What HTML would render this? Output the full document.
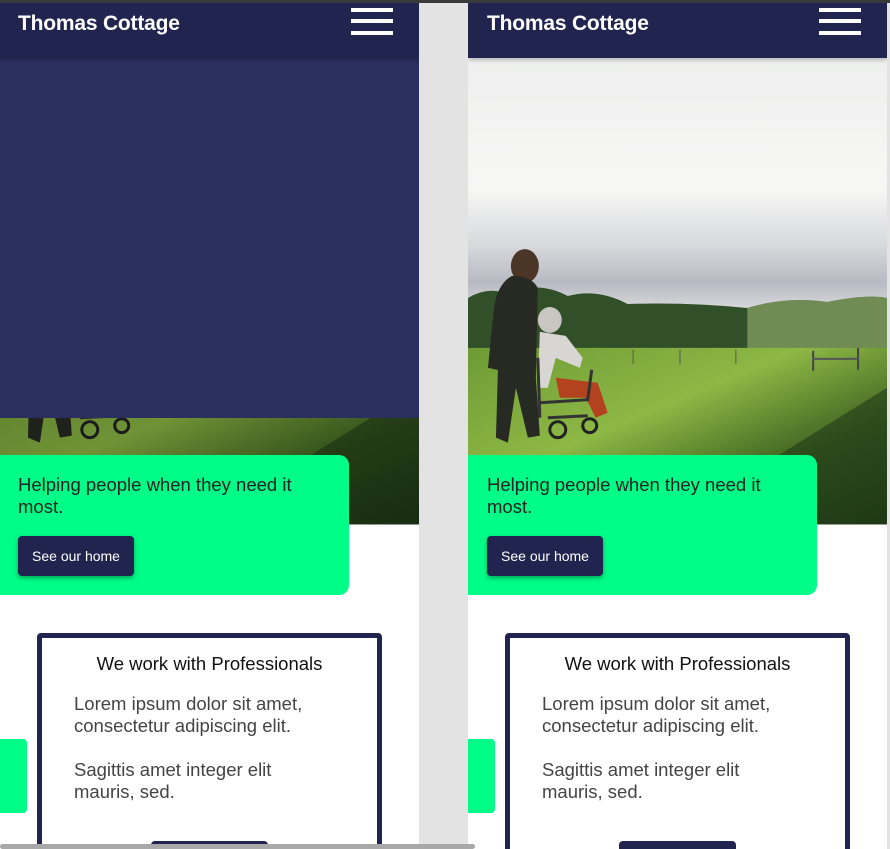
<!DOCTYPE html>
<html><head><meta charset="utf-8">
<style>
*{margin:0;padding:0;box-sizing:border-box}
html,body{width:890px;height:849px;overflow:hidden;background:#e3e3e3;font-family:"Liberation Sans",sans-serif}
.topline{position:absolute;left:0;top:0;width:890px;height:3px;background:#3a3a3a}
.panel{position:absolute;top:3px;width:419px;height:846px;background:#fff;overflow:hidden}
.hdr{position:absolute;left:0;top:0;width:100%;height:55px;background:#20244f;z-index:5;box-shadow:0 2px 4px rgba(0,0,0,.25)}
.hdr .t{position:absolute;left:18px;top:9px;color:#fff;font-size:21px;font-weight:bold;letter-spacing:-.2px}
.hb{position:absolute;left:351px;width:42px;height:4px;background:#fff}
.hero{position:absolute;left:0;top:55px;width:419px;height:467px}
.ov{position:absolute;left:0;top:55px;width:419px;height:360px;background:#2b2f5f;z-index:2}
.card{position:absolute;left:0;top:452px;width:349px;height:140px;background:#00fd87;border-radius:0 10px 10px 0;z-index:3}
.card p{position:absolute;left:18px;top:19px;font-size:18.5px;line-height:22px;color:#222;width:305px}
.btn{position:absolute;left:18px;top:81px;width:116px;height:40px;background:#20244f;border-radius:4px;color:#fff;font-size:14px;line-height:40px;text-align:center;box-shadow:0 2px 5px rgba(0,0,0,.35)}
.tab{position:absolute;left:0;top:736px;width:27px;height:74px;background:#00fd87;border-radius:0 4px 4px 0}
.box{position:absolute;left:37px;top:630px;width:345px;height:260px;border:5px solid #20244f;border-radius:4px;background:#fff}
.box h3{position:absolute;left:0;width:100%;top:15px;text-align:center;font-weight:normal;font-size:18.5px;color:#111}
.box .tx{position:absolute;left:32px;top:55px;font-size:18.5px;line-height:22px;color:#444;width:250px}
.box .b2{position:absolute;left:109px;top:203px;width:117px;height:40px;background:#20244f;border-radius:4px}
.sb{position:absolute;left:0;top:844px;width:475px;height:5px;background:#a8a8a8;border-radius:3px;z-index:9}
</style></head><body>
<div class="topline"></div>

<svg width="0" height="0" style="position:absolute">
<defs>
<linearGradient id="sky" x1="0" y1="0" x2="0" y2="1">
<stop offset="0" stop-color="#eeefee"/><stop offset=".28" stop-color="#f7f7f6"/><stop offset=".4" stop-color="#d8d9dc"/><stop offset=".48" stop-color="#b8bac3"/><stop offset=".56" stop-color="#e4e4e2"/><stop offset=".62" stop-color="#f6f5ea"/></linearGradient>
<linearGradient id="grass" x1="0" y1="0" x2="1" y2="1">
<stop offset="0" stop-color="#6e9a35"/><stop offset=".4" stop-color="#8db845"/><stop offset=".7" stop-color="#3f6522"/><stop offset="1" stop-color="#1e3516"/></linearGradient>
<g id="scene">
<rect width="420" height="467" fill="url(#sky)"/>
<path d="M0 240 Q20 228 40 236 Q70 222 100 238 Q130 230 160 246 Q220 244 280 250 Q320 238 360 244 Q400 236 420 240 L420 292 L0 292Z" fill="#31502a"/>
<path d="M280 250 Q320 238 360 244 Q400 236 420 240 L420 292 L280 292Z" fill="#9bb270" opacity=".6"/>
<rect y="290" width="420" height="177" fill="url(#grass)"/>
<path d="M200 467 L420 330 L420 467Z" fill="#1f3a17" opacity=".6"/>
<rect x="345" y="293" width="2" height="20" fill="#444"/><rect x="390" y="290" width="2" height="22" fill="#444"/><rect x="345" y="300" width="46" height="2" fill="#555"/>
<rect x="165" y="292" width="1" height="14" fill="#555"/><rect x="212" y="292" width="1" height="14" fill="#555"/><rect x="268" y="292" width="1" height="14" fill="#555"/>
<ellipse cx="57" cy="208" rx="14" ry="17" fill="#4a3526"/>
<path d="M44 218 Q30 225 26 250 L20 310 L30 312 L28 380 L40 385 L48 330 L60 380 L72 378 L68 320 L70 230 Q64 218 44 218Z" fill="#272a22"/>
<ellipse cx="82" cy="262" rx="12" ry="13" fill="#c9c5c0"/>
<path d="M72 274 L98 278 L115 300 L112 310 L88 300 L80 330 L70 330Z" fill="#d8d6d2"/>
<path d="M88 320 L130 325 L140 355 L128 360 L118 340 L92 340Z" fill="#b3421e"/>
<path d="M70 300 L72 360 M72 345 L120 342 L124 312 M80 360 L120 358" stroke="#333" stroke-width="3" fill="none"/>
<circle cx="90" cy="372" r="8" fill="none" stroke="#222" stroke-width="3"/><circle cx="122" cy="368" r="7" fill="none" stroke="#222" stroke-width="3"/>
</g></defs></svg>

<div class="panel" style="left:0">
 <div class="hdr"><div class="t">Thomas Cottage</div><div class="hb" style="top:5px"></div><div class="hb" style="top:16px"></div><div class="hb" style="top:28px"></div></div>
 <svg class="hero" viewBox="0 0 420 467"><use href="#scene"/><rect width="420" height="467" fill="rgba(0,0,0,.2)"/></svg>
 <div class="ov"></div>
 <div class="card"><p>Helping people when they need it most.</p><div class="btn">See our home</div></div>
 <div class="tab"></div>
 <div class="box"><h3>We work with Professionals</h3><div class="tx">Lorem ipsum dolor sit amet, consectetur adipiscing elit.<br><br>Sagittis amet integer elit mauris, sed.</div><div class="b2"></div></div>
</div>

<div class="panel" style="left:468px">
 <div class="hdr"><div class="t" style="left:19px">Thomas Cottage</div><div class="hb" style="top:5px"></div><div class="hb" style="top:16px"></div><div class="hb" style="top:28px"></div></div>
 <svg class="hero" viewBox="0 0 420 467"><use href="#scene"/></svg>
 <div class="card"><p style="left:19px">Helping people when they need it most.</p><div class="btn" style="left:19px">See our home</div></div>
 <div class="tab"></div>
 <div class="box"><h3>We work with Professionals</h3><div class="tx">Lorem ipsum dolor sit amet, consectetur adipiscing elit.<br><br>Sagittis amet integer elit mauris, sed.</div><div class="b2"></div></div>
</div>
<div style="position:absolute;left:887px;top:3px;width:3px;height:846px;background:#e3e3e3"></div>
<div class="sb"></div>
</body></html>
